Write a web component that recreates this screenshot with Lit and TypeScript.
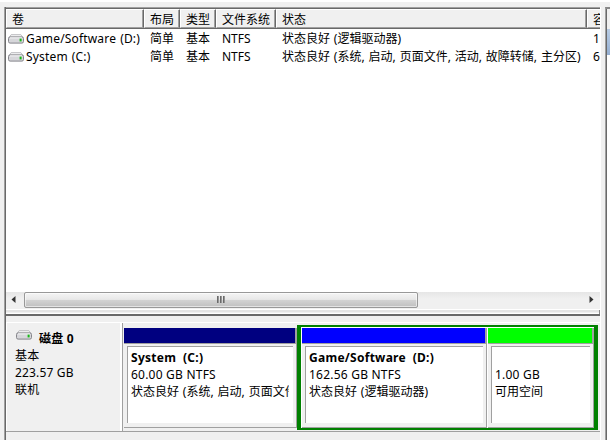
import { LitElement, html, css } from "lit";
import { customElement, property } from "lit/decorators.js";

@customElement("drive-icon")
class DriveIcon extends LitElement {
  static styles = css`
    :host { display: block; width: 16px; height: 10px; flex: none; }
    svg { display: block; }
  `;
  render() {
    return html`<svg width="16" height="10" viewBox="0 0 16 10">
      <path d="M3.2 .6h9.6L15 3.6H1z" fill="#f1f1f2" stroke="#b4b4b8" stroke-width=".8"/>
      <rect x=".5" y="2.9" width="15" height="6.2" rx="1.6" fill="#d6d6da" stroke="#85858b"/>
      <path d="M2 3.9h12" stroke="#f8f8fa"/>
      <rect x="11.6" y="4.6" width="2" height="2.8" fill="#17b817"/>
    </svg>`;
  }
}

@customElement("volume-list")
class VolumeList extends LitElement {
  static styles = css`
    :host { display: flex; flex-direction: column; height: 100%; background: #fff; overflow: hidden; }
    .row { display: grid; grid-template-columns: 138px 36px 36px 60px 311px 13px; height: 18px; line-height: 18px; }
    .head { height: 20px; line-height: 19px; background: #f0f0f0; border-bottom: 1px solid #696969; box-sizing: border-box; }
    .rows { padding-top: 1px; flex: 1; }
    .cell { padding-left: 6px; white-space: pre; overflow: hidden; box-sizing: border-box; word-spacing: .75px; }
    .head .cell { border-right: 1px solid #696969; border-bottom: 1px solid #a0a0a0; border-left: 1px solid #fff; border-top: 1px solid #fff; padding-left: 5px; box-shadow: inset -1px 0 #a0a0a0; line-height: 20px; }
    .head .cell:last-child { border-right: 0; box-shadow: none; }
    .name { display: flex; align-items: center; gap: 2px; padding-left: 2px; }
    .lat { letter-spacing: .17px; }
    .bar { display: flex; height: 17px; background: linear-gradient(#e6e6e6, #f0f0f0 40%); align-items: stretch; }
    .arrow { width: 18px; display: grid; place-items: center; flex: none; box-sizing: border-box; padding: 0 3px 2px 0; }
    .arrow:last-child { padding-right: 0; padding-left: 1px; }
    .track { flex: 1; display: flex; }
    .thumb { width: 394px; height: 16px; box-sizing: border-box; border: 1px solid #989898; border-radius: 2px; background: linear-gradient(#f4f4f4, #e8e8e8 46%, #d2d2d2 52%, #c0c0c0); box-shadow: inset 0 0 0 1px #ffffff90; display: flex; justify-content: center; align-items: center; gap: 1px; padding-bottom: 1px; }
    .grip { width: 2px; height: 7px; background: linear-gradient(90deg, #555, #aaa); }
  `;
  render() {
    const heads = ["卷", "布局", "类型", "文件系统", "状态", "容"];
    const rows = [
      ["Game/Software (D:)", "简单", "基本", "NTFS", "状态良好 (逻辑驱动器)", "1"],
      ["System (C:)", "简单", "基本", "NTFS", "状态良好 (系统, 启动, 页面文件, 活动, 故障转储, 主分区)", "6"],
    ];
    return html`
      <div class="row head">${heads.map((h) => html`<div class="cell">${h}</div>`)}</div>
      <div class="rows">
        ${rows.map((r) => html`<div class="row">${r.map((c, i) =>
          i === 0
            ? html`<div class="cell name"><drive-icon></drive-icon><span class="lat">${c}</span></div>`
            : html`<div class="cell">${c}</div>`)}</div>`)}
      </div>
      <div class="bar">
        <div class="arrow"><svg width="5" height="7"><path d="M4.5 0v7L.5 3.5z" fill="#333"/></svg></div>
        <div class="track"><div class="thumb"><i class="grip"></i><i class="grip"></i><i class="grip"></i></div></div>
        <div class="arrow"><svg width="5" height="7"><path d="M.5 0v7l4-3.5z" fill="#333"/></svg></div>
      </div>`;
  }
}

@customElement("disk-part")
class DiskPart extends LitElement {
  @property() name = "";
  @property() size = "";
  @property() status = "";
  @property() kind = "primary";
  static styles = css`
    :host { display: flex; flex-direction: column; box-sizing: border-box; height: 100px; flex: none; }
    .cap { height: 15px; flex: none; border-right: 2px solid #a0a0a0; }
    .primary { background: #000080; }
    .logical { background: #0000ff; }
    .free { background: #00ff00; }
    .body { flex: 1; min-height: 0; background: #f0f0f0; border: solid #a0a0a0; border-width: 1px 1px 1px 0; padding: 2px 3px 4px; box-sizing: border-box; }
    .well { height: 100%; box-sizing: border-box; background: #fff; border: solid #a0a0a0; border-width: 1px 0 0 1px; padding: 2px 4px 0 3px; overflow: hidden; }
    .line { height: 17px; line-height: 17px; overflow: hidden; white-space: pre; letter-spacing: .22px; }
    .line:last-child { letter-spacing: 0; word-spacing: .75px; }
    .line.name { font-weight: 700; letter-spacing: .27px; }
  `;
  render() {
    return html`<div class="cap ${this.kind}"></div>
      <div class="body"><div class="well">
        <div class="line name">${this.name}</div>
        <div class="line">${this.size}</div>
        <div class="line">${this.status}</div>
      </div></div>`;
  }
}

@customElement("app-root")
class AppRoot extends LitElement {
  static styles = css`
    :host { display: block; width: 612px; height: 442px; background: #fff; overflow: hidden; color: #000;
      font: 12px/17px "Noto Sans", "Noto Sans CJK SC", sans-serif; }
    .window { display: flex; width: 610px; height: 440px; box-sizing: border-box; border-top: 2px solid #fff; background: #f0f0f0; padding: 5px 0 0 4px; }
    .view { width: 596px; box-sizing: border-box; border-left: 1px solid #a0a0a0; flex: none; }
    .inner { border-left: 1px solid #696969; height: 100%; }
    .list { height: 302px; border-top: 1px solid #a0a0a0; box-shadow: inset 0 1px #696969; padding-top: 1px; box-sizing: border-box; }
    .split { height: 7px; box-sizing: border-box; border-bottom: 2px solid #696969; border-top: 1px solid #fff; background: #f0f0f0; box-shadow: inset -1px 0 #888, inset 0 2px #e4e4e4, inset 0 -1px #fff; }
    .graph { display: flex; margin-top: 6px; height: 110px; border-top: 1px solid #fff; border-bottom: 1px solid #a0a0a0; box-sizing: border-box; }
    .disk { width: 117px; box-sizing: border-box; padding: 7px 0 0 8px; border-left: 1px solid #fff; border-right: 1px solid #a0a0a0; box-shadow: inset -2px 0 #fff; flex: none; }
    .title { display: flex; gap: 7px; font-weight: 700; height: 17px; padding-left: 1px; letter-spacing: .2px; }
    .info { letter-spacing: .17px; }
    .parts { display: flex; flex: 1; padding-top: 2px; height: 105px; }
    .c { width: 173px; margin-top: 3px; margin-left: 1px; }
    .ext { display: flex; flex: none; width: 301px; height: 105px; box-sizing: border-box; border: solid #008000; border-width: 2px 4px; background: #fff; padding-top: 1px; }
    .d { width: 185px; margin-left: 1px; }
    .f { width: 106px; margin-left: 1px; }
    .edge { width: 5px; border-left: 1px solid #fff; box-sizing: border-box; flex: none; }
    .side { width: 5px; border-left: 1px solid #a0a0a0; border-top: 2px solid #888; box-shadow: inset 1px 0 #696969; background: #fff; box-sizing: border-box; }
    .sidehead { margin-left: 1px; height: 20px; background: #f0f0f0; }
    .selected { margin-left: 1px; height: 26px; background: linear-gradient(#b8cce4, #95afd2); }
  `;
  render() {
    return html`<div class="window">
      <div class="view"><div class="inner">
        <div class="list"><volume-list></volume-list></div>
        <div class="split"></div>
        <div class="graph">
          <div class="disk">
            <div class="title"><drive-icon></drive-icon>磁盘 0</div>
            <div class="info">基本</div><div class="info">223.57 GB</div><div class="info">联机</div>
          </div>
          <div class="parts">
            <disk-part class="c" name="System  (C:)" size="60.00 GB NTFS" status="状态良好 (系统, 启动, 页面文件" kind="primary"></disk-part>
            <div class="ext">
              <disk-part class="d" name="Game/Software  (D:)" size="162.56 GB NTFS" status="状态良好 (逻辑驱动器)" kind="logical"></disk-part>
              <disk-part class="f" name="" size="1.00 GB" status="可用空间" kind="free"></disk-part>
            </div>
          </div>
        </div>
      </div></div>
      <div class="edge"></div>
      <div class="side"><div class="sidehead"></div><div class="selected"></div></div>
    </div>`;
  }
}
